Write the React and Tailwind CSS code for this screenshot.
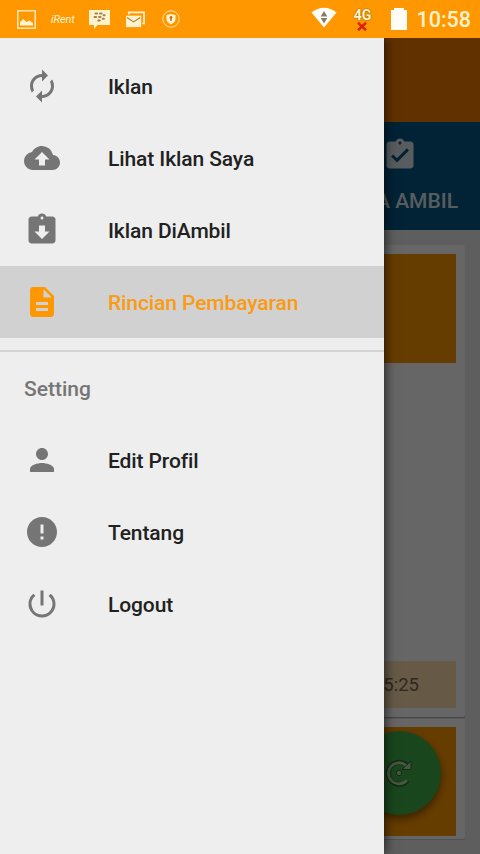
import React, { useState } from 'react';
import {
  MdAutorenew,
  MdBackup,
  MdAssignmentReturned,
  MdAssignmentTurnedIn,
  MdDescription,
  MdPerson,
  MdError,
  MdPowerSettingsNew,
} from 'react-icons/md';

const mainItems = [
  { id: 'iklan', label: 'Iklan', icon: MdAutorenew },
  { id: 'iklan-saya', label: 'Lihat Iklan Saya', icon: MdBackup },
  { id: 'diambil', label: 'Iklan DiAmbil', icon: MdAssignmentReturned },
  { id: 'pembayaran', label: 'Rincian Pembayaran', icon: MdDescription },
];

const settingItems = [
  { id: 'profil', label: 'Edit Profil', icon: MdPerson },
  { id: 'tentang', label: 'Tentang', icon: MdError },
  { id: 'logout', label: 'Logout', icon: MdPowerSettingsNew },
];

const StatusBar = () => (
  <div className="h-[38px] shrink-0 bg-[#ff9800] flex items-center text-[#fff3cf]">
    <svg className="ml-[17px] w-[19px] h-[19px]" viewBox="0 0 19 19" fill="none">
      <rect x="0.8" y="0.8" width="17.4" height="17.4" stroke="currentColor" strokeWidth="1.3" />
      <path d="M3 15.5V12l3.5-3 3 3 3-1.5 3.5 2.5v2.5z" fill="currentColor" />
    </svg>
    <span className="ml-[15px] w-[24px] text-[11px] italic leading-none whitespace-nowrap tracking-[-0.1px]">iRent</span>
    <svg className="ml-[14px] w-[21px] h-[20px]" viewBox="0 0 21 20">
      <path d="M0 1h21v15H8.5l-3.5 4v-4H0z" fill="currentColor" />
      <g fill="#a8834a">
        <rect x="5.5" y="3.5" width="3.6" height="2" rx="1" />
        <rect x="10" y="3.5" width="3.6" height="2" rx="1" />
        <rect x="4.5" y="7" width="3.6" height="2" rx="1" />
        <rect x="9" y="7" width="3.6" height="2" rx="1" />
        <rect x="13.5" y="5.3" width="3.2" height="2" rx="1" />
        <rect x="8.2" y="10.5" width="3.6" height="2" rx="1" />
        <rect x="12.7" y="8.8" width="3.2" height="2" rx="1" />
      </g>
    </svg>
    <svg className="ml-[16px] w-[19px] h-[17px]" viewBox="0 0 20 17" fill="none">
      <path d="M3 3.2V1h16v11.5h-1.7" stroke="currentColor" strokeWidth="1.8" />
      <rect x="0" y="4.5" width="16" height="12" fill="currentColor" />
      <path d="M1 6.5l7 4.5 7-4.5" stroke="#b07a2c" strokeWidth="1.2" />
    </svg>
    <svg className="ml-[17px] w-[18px] h-[18px]" viewBox="0 0 18 18" fill="none">
      <circle cx="9" cy="9" r="8.2" stroke="currentColor" strokeWidth="0.8" />
      <path d="M9 4l4.500 1v4c0 2.500-2 4-4.500 5.500C6.500 13 4.500 11.500 4.500 9V5z" fill="currentColor" />
      <path d="M9 6a1.5 1.5 0 0 1 .7 2.800V11H8.300V8.800A1.500 1.500 0 0 1 9 6z" fill="#b87518" />
    </svg>

    <div className="ml-auto mr-[9px] flex items-center">
      <svg className="-mt-1 w-[26px] h-[21px]" viewBox="0 0 26 21">
        <path d="M0.5 5.5C8-.8 18-.8 25.5 5.5L13 20.5z" fill="#fffdf5" />
        <path d="M13 4l3.3 5.500H9.700zM13 16.500l-3.300-5.500h6.600z" fill="#857a6b" />
      </svg>
      <div className="ml-[15px] w-[20px] flex flex-col items-center">
        <span className="text-[14px] font-bold leading-[14px] [text-shadow:0_0_2px_#7a5200]">4G</span>
        <svg className="w-[10px] h-[9px]" viewBox="0 0 10 9">
          <path d="M1 0.8l8 7.400M9 0.8l-8 7.400" stroke="#d9260c" strokeWidth="2.6" />
        </svg>
      </div>
      <svg className="ml-[19px] w-[16px] h-[22px]" viewBox="0 0 16 22">
        <path d="M0 2h3V0h10v2h3v20H0z" fill="#fffdf5" />
      </svg>
      <span className="ml-[9px] mt-0.5 text-[21.5px] font-medium leading-none">10:58</span>
    </div>
  </div>
);

const MenuItem = ({ icon: Icon, label, active, onClick }) => (
  <button
    type="button"
    onClick={onClick}
    className={`w-full h-[72px] pl-6 flex items-center text-left ${
      active ? 'bg-[#d1d1d1] text-[#f99b14]' : 'text-[#212121]'
    }`}
  >
    <Icon size={36} className={active ? 'text-[#ff9800]' : 'text-[#757575]'} />
    <span className="ml-12 text-[21px] font-medium whitespace-nowrap pt-1 tracking-[-0.1px]">{label}</span>
  </button>
);

const Drawer = ({ active, onSelect }) => (
  <div className="absolute inset-y-0 left-0 w-[384px] bg-[#eeeeee] pt-3 shadow-[2px_0_10px_rgba(0,0,0,0.6)]">
    {mainItems.map((item) => (
      <MenuItem key={item.id} {...item} active={active === item.id} onClick={() => onSelect(item.id)} />
    ))}
    <div className="mt-3 h-[2px] bg-[#d3d3d3]" />
    <div className="h-[72px] pl-6 pt-[3px] flex items-center text-[21px] font-medium text-[#757575]">
      Setting
    </div>
    {settingItems.map((item) => (
      <MenuItem key={item.id} {...item} active={active === item.id} onClick={() => onSelect(item.id)} />
    ))}
  </div>
);

const MainScreen = () => (
  <div className="h-full flex flex-col bg-[#ececec]">
    <div className="h-[84px] shrink-0 bg-[#f57c00]" />
    <div className="h-[108px] shrink-0 bg-[#055587] flex flex-col items-end pt-[15px]">
      <MdAssignmentTurnedIn size={36} className="mr-[62px] text-[#dfe6ea]" />
      <span className="mr-[22px] mt-[12px] text-[21px] font-medium leading-[32px] text-[#dfe6ea]">SAYA AMBIL</span>
    </div>

    {/* Ad cards */}
    <div className="pt-[15px] pl-[15px] pr-[15px]">
      <div className="h-[472px] bg-white rounded-xs shadow-[0_1px_1px_rgba(0,0,0,0.3)] flex flex-col px-[9px] pt-[9px] pb-[9px]">
        <div className="h-[109px] bg-[#ff9800]" />
        <div className="mt-auto h-[47px] bg-[#ffe0b2] flex items-center justify-end pr-[37px] pt-[3px] text-[18.5px] text-[#756650]">
          15:25
        </div>
      </div>
      <div className="mt-[2px] h-[120px] bg-white rounded-xs shadow-[0_1px_1px_rgba(0,0,0,0.15)] px-[9px] pt-[8px]">
        <div className="h-[109px] bg-[#ff9800]" />
      </div>
    </div>
  </div>
);

const App = () => {
  const [active, setActive] = useState('pembayaran');

  return (
    <div className="w-[480px] h-[854px] flex flex-col overflow-hidden font-['Roboto',sans-serif]">
      <StatusBar />
      <div className="relative flex-1 min-h-0 overflow-hidden">
        <MainScreen />

        {/* Refresh button */}
        <div className="absolute right-[39px] bottom-[39px] w-[84px] h-[84px] rounded-full bg-[#43b04b] shadow-[0_4px_8px_rgba(0,0,0,0.45)] flex items-center justify-center">
          <svg className="w-[28px] h-[28px]" viewBox="0 0 28 28" fill="none">
            <path d="M22.5 21.500A11 11 0 1 1 21.500 6" stroke="#2d6b32" strokeWidth="5" />
            <path d="M17 10.500h9V2z" fill="#b0d8a4" stroke="#2d6b32" strokeWidth="1" />
            <path d="M22 21A10.500 10.500 0 1 1 21 6.500" stroke="#b0d8a4" strokeWidth="2.8" />
            <circle cx="14" cy="14" r="2.6" fill="#b0d8a4" stroke="#2d6b32" strokeWidth="1" />
          </svg>
        </div>

        <div className="absolute inset-0 bg-black/60" />
        <Drawer active={active} onSelect={setActive} />
      </div>
    </div>
  );
};

export default App;
